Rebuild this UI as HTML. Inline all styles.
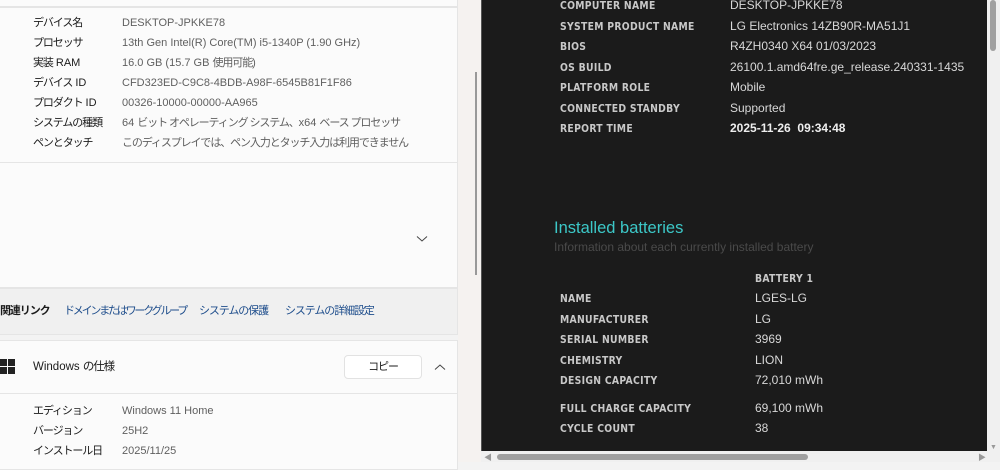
<!DOCTYPE html>
<html><head><meta charset="utf-8"><style>
*{margin:0;padding:0;box-sizing:border-box}
body{width:1000px;height:462px;overflow:hidden;background:#f3f3f3;position:relative;font-family:"Liberation Sans","Noto Sans CJK JP",sans-serif}
.a{position:absolute;white-space:nowrap;line-height:14px}
.l{font-size:11px;color:#1b1b1b}
.v{font-size:11px;color:#5f5f5f}
.j{letter-spacing:-1.1px}
.card{position:absolute;left:0;width:458px;background:#fbfbfb;border:1px solid #e5e5e5;border-left:none}
.dk{position:absolute;left:481px;top:0;width:506px;height:451px;background:#1b1b1b;border-left:1px solid #555}
.rl{position:absolute;left:78px;font-size:10.3px;font-weight:bold;color:#c8c8c8;letter-spacing:.3px;font-family:"DejaVu Sans Condensed","Liberation Sans",sans-serif}
.rv{position:absolute;font-size:12px;color:#d8d8d8;white-space:nowrap}
</style></head><body>
<div class="card" style="top:-5px;height:12px"></div>
<div class="card" style="top:7px;height:156px"></div>
<div class="card" style="top:162px;height:126px"></div>
<div class="a" style="left:0;top:288px;width:458px;height:47px;background:#f0f0f0;border:1px solid #e5e5e5;border-left:none"></div>
<div class="card" style="top:340px;height:130px"></div>
<div class="a" style="left:0;top:393px;width:458px;height:1px;background:#e5e5e5"></div>

<div class="a l j" style="left:33px;top:16px">デバイス名</div><div class="a v" style="left:122px;top:16px">DESKTOP-JPKKE78</div>
<div class="a l j" style="left:33px;top:36px">プロセッサ</div><div class="a v" style="left:122px;top:36px">13th Gen Intel(R) Core(TM) i5-1340P (1.90 GHz)</div>
<div class="a l" style="left:33px;top:56px"><span class="j">実装</span> RAM</div><div class="a v" style="left:122px;top:56px">16.0 GB (15.7 GB <span class="j">使用可能</span>)</div>
<div class="a l" style="left:33px;top:76px"><span class="j">デバイス</span> ID</div><div class="a v" style="left:122px;top:76px">CFD323ED-C9C8-4BDB-A98F-6545B81F1F86</div>
<div class="a l" style="left:33px;top:96px"><span class="j">プロダクト</span> ID</div><div class="a v" style="left:122px;top:96px">00326-10000-00000-AA965</div>
<div class="a l j" style="left:33px;top:116px">システムの種類</div><div class="a v" style="left:122px;top:116px">64 <span class="j">ビット オペレーティング システム、</span>x64 <span class="j">ベース プロセッサ</span></div>
<div class="a l j" style="left:33px;top:136px">ペンとタッチ</div><div class="a v j" style="left:122px;top:136px">このディスプレイでは、ペン入力とタッチ入力は利用できません</div>
<svg class="a" style="left:416px;top:235px" width="12" height="8"><path d="M1 1.5L6 6 11 1.5" stroke="#444" fill="none"/></svg>

<div class="a j" style="left:0;top:304px;font-size:11px;color:#1b1b1b;font-weight:bold">関連リンク</div>
<div class="a" style="left:64px;top:304px;font-size:11px;color:#1f4e8c;letter-spacing:-2.2px">ドメインまたはワークグループ</div>
<div class="a j" style="left:199px;top:304px;font-size:11px;color:#1f4e8c">システムの保護</div>
<div class="a j" style="left:285px;top:304px;font-size:11px;color:#1f4e8c">システムの詳細設定</div>

<div class="a" style="left:0;top:359px;width:7px;height:7px;background:#222"></div>
<div class="a" style="left:8px;top:359px;width:7px;height:7px;background:#222"></div>
<div class="a" style="left:0;top:367px;width:7px;height:7px;background:#222"></div>
<div class="a" style="left:8px;top:367px;width:7px;height:7px;background:#222"></div>
<div class="a" style="left:33px;top:360px;font-size:11.5px;color:#1b1b1b">Windows <span class="j">の仕様</span></div>
<div class="a j" style="left:344px;top:355px;width:78px;height:24px;background:#fff;border:1px solid #e2e2e2;border-radius:4px;font-size:11px;text-align:center;line-height:22px;color:#1b1b1b">コピー</div>
<svg class="a" style="left:434px;top:363px" width="12" height="8"><path d="M1 6.5L6 2 11 6.5" stroke="#444" fill="none"/></svg>
<div class="a l j" style="left:33px;top:404px">エディション</div><div class="a v" style="left:122px;top:404px">Windows 11 Home</div>
<div class="a l j" style="left:33px;top:424px">バージョン</div><div class="a v" style="left:122px;top:424px">25H2</div>
<div class="a l j" style="left:33px;top:444px">インストール日</div><div class="a v" style="left:122px;top:444px">2025/11/25</div>

<div class="a" style="left:458px;top:0;width:23px;height:462px;background:#f5f2f0"></div>
<div class="a" style="left:475px;top:72px;width:2px;height:203px;background:#999"></div>

<div class="dk">
<div class="rl" style="top:0">COMPUTER NAME</div><div class="rv" style="left:248px;top:-2px">DESKTOP-JPKKE78</div>
<div class="rl" style="top:21px">SYSTEM PRODUCT NAME</div><div class="rv" style="left:248px;top:19px">LG Electronics 14ZB90R-MA51J1</div>
<div class="rl" style="top:41px">BIOS</div><div class="rv" style="left:248px;top:39px">R4ZH0340 X64 01/03/2023</div>
<div class="rl" style="top:62px">OS BUILD</div><div class="rv" style="left:248px;top:60px">26100.1.amd64fre.ge_release.240331-1435</div>
<div class="rl" style="top:82px">PLATFORM ROLE</div><div class="rv" style="left:248px;top:80px">Mobile</div>
<div class="rl" style="top:103px">CONNECTED STANDBY</div><div class="rv" style="left:248px;top:101px">Supported</div>
<div class="rl" style="top:123px">REPORT TIME</div><div class="rv" style="left:248px;top:121px;font-weight:bold;color:#eee">2025-11-26&nbsp; 09:34:48</div>
<div class="rv" style="left:72px;top:219px;font-size:16.5px;color:#3cc8c8">Installed batteries</div>
<div class="rv" style="left:72px;top:240px;font-size:12px;color:#4a4a4a">Information about each currently installed battery</div>
<div class="rl" style="left:273px;top:273px">BATTERY 1</div>
<div class="rl" style="top:293px">NAME</div><div class="rv" style="left:273px;top:291px">LGES-LG</div>
<div class="rl" style="top:314px">MANUFACTURER</div><div class="rv" style="left:273px;top:312px">LG</div>
<div class="rl" style="top:334px">SERIAL NUMBER</div><div class="rv" style="left:273px;top:332px">3969</div>
<div class="rl" style="top:355px">CHEMISTRY</div><div class="rv" style="left:273px;top:353px">LION</div>
<div class="rl" style="top:375px">DESIGN CAPACITY</div><div class="rv" style="left:273px;top:373px">72,010 mWh</div>
<div class="rl" style="top:403px">FULL CHARGE CAPACITY</div><div class="rv" style="left:273px;top:401px">69,100 mWh</div>
<div class="rl" style="top:423px">CYCLE COUNT</div><div class="rv" style="left:273px;top:421px">38</div>
</div>
<div class="a" style="left:987px;top:0;width:13px;height:451px;background:#f0f0f0"></div>
<div class="a" style="left:990px;top:0;width:6px;height:51px;background:#a0a0a0;border-radius:3px"></div>
<div class="a" style="left:990px;top:441px;font-size:7px;color:#999">▼</div>
<div class="a" style="left:481px;top:451px;width:519px;height:11px;background:#f0f0f0"></div>
<div class="a" style="left:497px;top:454px;width:311px;height:6px;background:#a0a0a0;border-radius:3px"></div>
<div class="a" style="left:484px;top:451px;font-size:8px;color:#999">◀</div>
<div class="a" style="left:978px;top:451px;font-size:8px;color:#999">▶</div>
</body></html>
